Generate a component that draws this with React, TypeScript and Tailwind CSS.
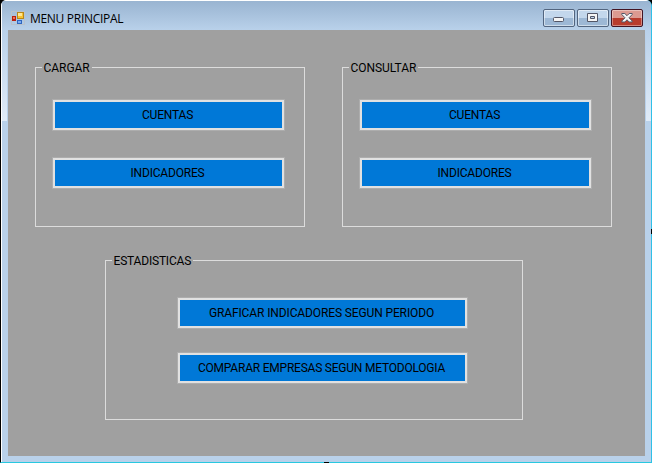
import React from "react";

function MenuButton({ label, className = "" }: { label: string; className?: string }) {
  return (
    <button className={`block h-8 border border-[#adadad] bg-[#e1e1e1] p-0.5 ${className}`}>
      <span className="flex h-full items-center justify-center whitespace-nowrap bg-[#0078d7] pr-0.5">{label}</span>
    </button>
  );
}

function Group({ title, titleClass = "", className = "", children }: { title: string; titleClass?: string; className?: string; children: React.ReactNode }) {
  return (
    <fieldset className={`relative h-40 border border-[#dcdcdc] ${className}`}>
      <span className={`absolute -top-2 left-1.5 bg-[#a0a0a0] pl-[1.5px] pr-0.5 leading-4 ${titleClass}`}>{title}</span>
      {children}
    </fieldset>
  );
}

function FormIcon() {
  return (
    <svg width="14" height="14" viewBox="0 0 14 14" shapeRendering="crispEdges">
      <rect x=".5" y=".5" width="13" height="13" fill="none" stroke="#b9c2cc" />
      <rect x="6.5" y="1.5" width="6" height="6" fill="#f7c331" stroke="#b98718" />
      <rect x="7" y="2" width="4" height="3" fill="#ffe796" />
      <rect x="1" y="5" width="4" height="5" fill="#b92010" />
      <rect x="2" y="6" width="2" height="2" fill="#ed7058" />
      <rect x="6" y="9" width="5" height="4" fill="#2f66c0" />
      <rect x="7" y="10" width="3" height="2" fill="#7dacf0" />
    </svg>
  );
}

const control = "flex h-[18px] w-8 items-center justify-center rounded-[2px] border border-[#52657f] shadow-[inset_0_0_0_1px_#ffffff80]";

export default function App() {
  return (
    <div className="relative flex h-[463px] w-[652px] flex-col overflow-hidden bg-black font-['Roboto',sans-serif] text-[12px] font-normal tracking-[-0.19px] text-black">
      <div className="flex h-[463px] w-[652px] flex-col overflow-hidden rounded-t-[6px] border-b border-l border-r border-b-[#28c8e0] border-l-black border-r-[#30c0e8] bg-[#b9d1ea]">
        <header className="flex h-[30px] shrink-0 items-start border-l border-t border-white bg-linear-to-b from-[#99b4d1] to-[#b9d1ea] pl-[9px] pr-2">
          <div className="mt-[10px]"><FormIcon /></div>
          <h1 className="ml-[5px] mt-[10px] whitespace-nowrap font-['Open_Sans',sans-serif] text-[12px] font-normal leading-4 tracking-[-0.3px]">MENU PRINCIPAL</h1>
          <div className="ml-auto mt-2 flex gap-0.5">
            <button className={`${control} bg-linear-to-b from-[#c3d7ec] from-50% to-[#9db8d5] to-50%`}>
              <svg className="mt-1" width="12" height="6" viewBox="0 0 12 6"><rect x=".5" y=".5" width="10" height="4" rx="1" fill="#f5f5f5" stroke="#535666" /></svg>
            </button>
            <button className={`${control} bg-linear-to-b from-[#c3d7ec] from-50% to-[#9db8d5] to-50%`}>
              <svg width="12" height="10" viewBox="0 0 12 10"><path d="M.5.5h10v8H.5zM3.5 3.5v2h4v-2z" fill="#f5f5f5" fillRule="evenodd" stroke="#535666" /></svg>
            </button>
            <button className="flex h-[18px] w-8 items-center justify-center rounded-[2px] border border-[#431422] bg-linear-to-b from-[#dc9a91] from-50% to-[#b83b2c] to-50% shadow-[inset_0_0_0_1px_#ffffff60]">
              <svg width="12" height="10" viewBox="0 0 12 10"><path d="M.8.5h3L6 2.7 8.2.5h3v1L8 4.8l3.2 3.2v1h-3L6 6.8 3.8 9h-3V8L4 4.8.8 1.5z" fill="#f5f5f5" stroke="#535666" /></svg>
            </button>
          </div>
        </header>
        <div className="flex min-h-0 flex-1">
          <div className="w-[7px] border-l border-white"><div className="h-[91px] border-r border-[#b9d1ea] bg-linear-to-b from-[#b9d1ea] to-[#e0ebf7]" /></div>
          <main className="h-[426px] w-[637px] bg-[#a0a0a0] pl-[27px] pt-[37px]">
            <div className="flex gap-[37px]">
              {["CARGAR", "CONSULTAR"].map((title) => (
                <Group key={title} title={title} titleClass="tracking-[-0.05px]" className="w-[270px] pl-4 pt-[31px]">
                  <MenuButton label="CUENTAS" className="w-[233px]" />
                  <MenuButton label="INDICADORES" className="mt-[26px] w-[233px]" />
                </Group>
              ))}
            </div>
            <Group title="ESTADISTICAS" className="ml-[70px] mt-[33px] w-[418px] pl-[71px] pt-9">
              <MenuButton label="GRAFICAR INDICADORES SEGUN PERIODO" className="w-[291px] tracking-[-0.12px]" />
              <MenuButton label="COMPARAR EMPRESAS SEGUN METODOLOGIA" className="mt-[23px] w-[291px] tracking-[-0.22px]" />
            </Group>
          </main>
          <div className="w-[6px]"><div className="h-[91px] border-l border-[#b9d1ea] bg-linear-to-b from-[#b9d1ea] to-[#e0ebf7]" /></div>
        </div>
      </div>
      <i className="absolute bottom-0 left-[324px] h-px w-[5px] bg-black" />
      <i className="absolute right-0 top-[229px] h-[5px] w-px bg-black" />
    </div>
  );
}
